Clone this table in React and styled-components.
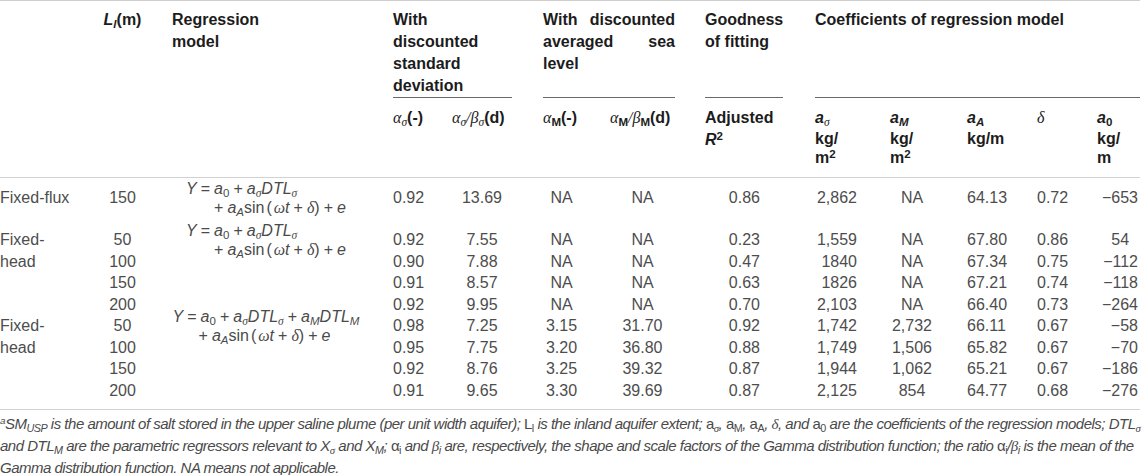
import React from "react";
import styled, { createGlobalStyle } from "styled-components";

const Global = createGlobalStyle`
  html, body { margin: 0; padding: 0; background: #ffffff; }
  body { font-family: "Liberation Sans", Arial, sans-serif; }
`;

const COLS = [100, 72, 221, 59, 91, 67, 95, 110, 75, 77, 70, 60, 43];

// body alignment per column
const BODY = [
  { align: "left", pr: 0 },
  { align: "center", pr: 27 },
  { align: "center", pr: 33 },
  { align: "left", pr: 0 },
  { align: "center", pr: 31 },
  { align: "center", pr: 30 },
  { align: "center", pr: 30 },
  { align: "right", pr: 55 },
  { align: "right", pr: 33 },
  { align: "center", pr: 33 },
  { align: "left", pr: 0 },
  { align: "left", pr: 0 },
  { align: "right", pr: 2 },
];

const Page = styled.div`
  width: 1145px;
  height: 475px;
  overflow: hidden;
  background: #fff;
`;

const Grid = styled.div`
  display: grid;
  grid-template-columns: ${COLS.map((c) => `${c}px`).join(" ")};
  width: 1140px;
  border-top: 1px solid #cfcfcf;
`;

const Rule = styled.div`
  grid-column: 1 / -1;
  grid-row: ${(p) => p.$row};
  height: 1px;
  background: #d2d2d2;
`;

const HeadCell = styled.div`
  grid-column: ${(p) => p.$col};
  grid-row: ${(p) => p.$row};
  padding: ${(p) => p.$pt}px 0 ${(p) => p.$pb || 0}px 0;
  text-align: ${(p) => p.$align || "left"};
  padding-right: ${(p) => p.$pr || 0}px;
  font-size: 16px;
  font-weight: 700;
  line-height: 22px;
  color: #1c1c1c;
  white-space: nowrap;
`;

const GroupHead = styled.div`
  grid-column: ${(p) => p.$col};
  grid-row: 1;
  margin-right: ${(p) => p.$mr}px;
  padding-top: 8px;
  border-bottom: 1px solid #6a6a6a;
  font-size: 16px;
  font-weight: 700;
  line-height: 22px;
  color: #1c1c1c;
  text-align: justify;
`;

const Sym = styled.div`
  line-height: 22px;
`;

const Unit = styled.div`
  line-height: 19px;
`;

const Cell = styled.div`
  grid-column: ${(p) => p.$col};
  grid-row: ${(p) => p.$row};
  padding: ${(p) => p.$pt || 0}px ${(p) => p.$pr || 0}px ${(p) => p.$pb || 0}px 0;
  text-align: ${(p) => p.$align};
  font-size: 16px;
  line-height: 21.5px;
  color: #4d4d4d;
  white-space: nowrap;
`;

const Greek = styled.span`
  font-family: "Liberation Serif", "DejaVu Serif", serif;
  font-style: italic;
  font-weight: 400;
`;

const BI = styled.span`
  font-style: italic;
`;

const Sub = styled.sub`
  font-size: 0.72em;
  vertical-align: -0.28em;
  line-height: 0;
`;

const Sup = styled.sup`
  font-size: 0.72em;
  vertical-align: 0.42em;
  line-height: 0;
`;

const FormulaBox = styled.div`
  display: inline-block;
  vertical-align: top;
  text-align: left;
  line-height: 19px;
  margin: -8px 0 -8.5px;
  color: #4a4a4a;
`;

const FLine = styled.div`
  padding-left: ${(p) => p.$indent || 0}px;
  white-space: nowrap;
`;

const V = styled.span`
  font-style: italic;
`;

const Op = styled.span`
  margin: 0 ${(p) => (p.$tight ? 2 : 4)}px;
`;

const Foot = styled.div`
  padding-top: 3px;
  font-size: 15px;
  line-height: 21px;
  font-style: italic;
  color: #4a4a4a;
  letter-spacing: -0.5px;
  white-space: nowrap;
`;

const Up = styled.span`
  font-style: normal;
`;

const FootSup = styled.sup`
  font-size: 0.66em;
  vertical-align: 0.5em;
  line-height: 0;
`;

const sig = <Greek>σ</Greek>;

const SinPart = () => (
  <>
    <Op>+</Op>
    <V>a</V>
    <Sub>
      <V>A</V>
    </Sub>
    sin<Op $tight>(</Op>
    <Greek>ω</Greek>
    <V>t</V>
    <Op>+</Op>
    <Greek>δ</Greek>)<Op>+</Op>
    <V>e</V>
  </>
);

const Formula1 = () => (
  <FormulaBox>
    <FLine>
      <V>Y</V>
      <Op>=</Op>
      <V>a</V>
      <Sub>0</Sub>
      <Op>+</Op>
      <V>a</V>
      <Sub>{sig}</Sub>
      <V>DTL</V>
      <Sub>{sig}</Sub>
    </FLine>
    <FLine $indent={24}>
      <SinPart />
    </FLine>
  </FormulaBox>
);

const Formula2 = () => (
  <FormulaBox>
    <FLine>
      <V>Y</V>
      <Op>=</Op>
      <V>a</V>
      <Sub>0</Sub>
      <Op>+</Op>
      <V>a</V>
      <Sub>{sig}</Sub>
      <V>DTL</V>
      <Sub>{sig}</Sub>
      <Op>+</Op>
      <V>a</V>
      <Sub>
        <V>M</V>
      </Sub>
      <V>DTL</V>
      <Sub>
        <V>M</V>
      </Sub>
    </FLine>
    <FLine $indent={22}>
      <SinPart />
    </FLine>
  </FormulaBox>
);

const ROW1 = ["150", "0.92", "13.69", "NA", "NA", "0.86", "2,862", "NA", "64.13", "0.72", "−653"];

const GROUP2 = [
  ["50", "0.92", "7.55", "NA", "NA", "0.23", "1,559", "NA", "67.80", "0.86", "54\u2007"],
  ["100", "0.90", "7.88", "NA", "NA", "0.47", "1840", "NA", "67.34", "0.75", "−112"],
  ["150", "0.91", "8.57", "NA", "NA", "0.63", "1826", "NA", "67.21", "0.74", "−118"],
  ["200", "0.92", "9.95", "NA", "NA", "0.70", "2,103", "NA", "66.40", "0.73", "−264"],
];

const GROUP3 = [
  ["50", "0.98", "7.25", "3.15", "31.70", "0.92", "1,742", "2,732", "66.11", "0.67", "−58"],
  ["100", "0.95", "7.75", "3.20", "36.80", "0.88", "1,749", "1,506", "65.82", "0.67", "−70"],
  ["150", "0.92", "8.76", "3.25", "39.32", "0.87", "1,944", "1,062", "65.21", "0.67", "−186"],
  ["200", "0.91", "9.65", "3.30", "39.69", "0.87", "2,125", "854", "64.77", "0.68", "−276"],
];

// data values for a row, in cols 2 and 4..13
function ValueCells({ row, values, pt = 0, pb = 0 }) {
  const cols = [2, 4, 5, 6, 7, 8, 9, 10, 11, 12, 13];
  return cols.map((c, i) => (
    <Cell
      key={c}
      $col={c}
      $row={row}
      $align={BODY[c - 1].align}
      $pr={BODY[c - 1].pr}
      $pt={pt}
      $pb={pb}
    >
      {values[i]}
    </Cell>
  ));
}

export default function App() {
  return (
    <Page>
      <Global />
      <Grid>
        {/* header row 1 */}
        <HeadCell $col={2} $row="1 / span 2" $pt={8} $align="center" $pr={27}>
          <BI>
            L<Sub>l</Sub>
          </BI>
          (m)
        </HeadCell>
        <HeadCell $col={3} $row="1 / span 2" $pt={8}>
          Regression
          <br />
          model
        </HeadCell>
        <GroupHead $col="4 / span 2" $mr={31}>
          With discounted standard deviation
        </GroupHead>
        <GroupHead $col="6 / span 2" $mr={30}>
          With discounted averaged sea level
        </GroupHead>
        <GroupHead $col="8" $mr={32}>
          Goodness of fitting
        </GroupHead>
        <GroupHead $col="9 / span 5" $mr={0}>
          Coefficients of regression model
        </GroupHead>

        {/* header row 2 */}
        <HeadCell $col={4} $row={2} $pt={9} $pb={10}>
          <Greek>α</Greek>
          <Sub>
            <Greek>σ</Greek>
          </Sub>
          (-)
        </HeadCell>
        <HeadCell $col={5} $row={2} $pt={9} $pb={10}>
          <Greek>α</Greek>
          <Sub>
            <Greek>σ</Greek>
          </Sub>
          <Greek>/β</Greek>
          <Sub>
            <Greek>σ</Greek>
          </Sub>
          (d)
        </HeadCell>
        <HeadCell $col={6} $row={2} $pt={9} $pb={10}>
          <Greek>α</Greek>
          <Sub>M</Sub>
          (-)
        </HeadCell>
        <HeadCell $col={7} $row={2} $pt={9} $pb={10}>
          <Greek>α</Greek>
          <Sub>M</Sub>
          <Greek>/β</Greek>
          <Sub>M</Sub>
          (d)
        </HeadCell>
        <HeadCell $col={8} $row={2} $pt={9} $pb={10}>
          Adjusted
          <br />
          <BI>R</BI>
          <Sup>2</Sup>
        </HeadCell>
        <HeadCell $col={9} $row={2} $pt={9} $pb={10}>
          <Sym>
            <BI>a</BI>
            <Sub>
              <Greek>σ</Greek>
            </Sub>
          </Sym>
          <Unit>
            kg/
            <br />m<Sup>2</Sup>
          </Unit>
        </HeadCell>
        <HeadCell $col={10} $row={2} $pt={9} $pb={10}>
          <Sym>
            <BI>a</BI>
            <Sub>
              <BI>M</BI>
            </Sub>
          </Sym>
          <Unit>
            kg/
            <br />m<Sup>2</Sup>
          </Unit>
        </HeadCell>
        <HeadCell $col={11} $row={2} $pt={9} $pb={10}>
          <Sym>
            <BI>a</BI>
            <Sub>
              <BI>A</BI>
            </Sub>
          </Sym>
          <Unit>kg/m</Unit>
        </HeadCell>
        <HeadCell $col={12} $row={2} $pt={9} $pb={10}>
          <Sym>
            <Greek>δ</Greek>
          </Sym>
        </HeadCell>
        <HeadCell $col={13} $row={2} $pt={9} $pb={10}>
          <Sym>
            <BI>a</BI>
            <Sub>0</Sub>
          </Sym>
          <Unit>
            kg/
            <br />m
          </Unit>
        </HeadCell>

        <Rule $row={3} />

        {/* Fixed-flux row */}
        <Cell $col={1} $row={4} $align="left" $pt={9} $pb={20.5}>
          Fixed-flux
        </Cell>
        <Cell $col={3} $row={4} $align="center" $pr={33} $pt={9} $pb={20.5}>
          <Formula1 />
        </Cell>
        <ValueCells row={4} values={ROW1} pt={9} pb={20.5} />

        {/* Fixed-head, first model */}
        <Cell $col={1} $row="5 / span 4" $align="left">
          Fixed-
          <br />
          head
        </Cell>
        <Cell $col={3} $row="5 / span 4" $align="center" $pr={33}>
          <Formula1 />
        </Cell>
        {GROUP2.map((vals, i) => (
          <ValueCells key={i} row={5 + i} values={vals} />
        ))}

        {/* Fixed-head, second model */}
        <Cell $col={1} $row="9 / span 4" $align="left">
          Fixed-
          <br />
          head
        </Cell>
        <Cell $col={3} $row="9 / span 4" $align="center" $pr={33}>
          <Formula2 />
        </Cell>
        {GROUP3.map((vals, i) => (
          <ValueCells key={i} row={9 + i} values={vals} pb={i === 3 ? 8 : 0} />
        ))}

        <Rule $row={13} />
      </Grid>

      <Foot>
        <div>
          <FootSup>a</FootSup>SM<Sub>USP</Sub> is the amount of salt stored in the upper saline plume (per unit width
          aquifer);{" "}
          <Up>
            L<Sub>l</Sub>
          </Up>{" "}
          is the inland aquifer extent;{" "}
          <Up>
            a<Sub>{sig}</Sub>
          </Up>
          ,{" "}
          <Up>
            a<Sub>M</Sub>
          </Up>
          ,{" "}
          <Up>
            a<Sub>A</Sub>
          </Up>
          , <Greek>δ</Greek>, and{" "}
          <Up>
            a<Sub>0</Sub>
          </Up>{" "}
          are the coefficients of the regression models; DTL<Sub>{sig}</Sub>
        </div>
        <div>
          and DTL<Sub>M</Sub> are the parametric regressors relevant to X<Sub>{sig}</Sub> and X<Sub>M</Sub>;{" "}
          <Up>
            α<Sub>i</Sub>
          </Up>{" "}
          and <Greek>β</Greek>
          <Sub>i</Sub> are, respectively, the shape and scale factors of the Gamma distribution function; the ratio{" "}
          <Up>
            α<Sub>i</Sub>
          </Up>
          /<Greek>β</Greek>
          <Sub>i</Sub> is the mean of the
        </div>
        <div>Gamma distribution function. NA means not applicable.</div>
      </Foot>
    </Page>
  );
}
